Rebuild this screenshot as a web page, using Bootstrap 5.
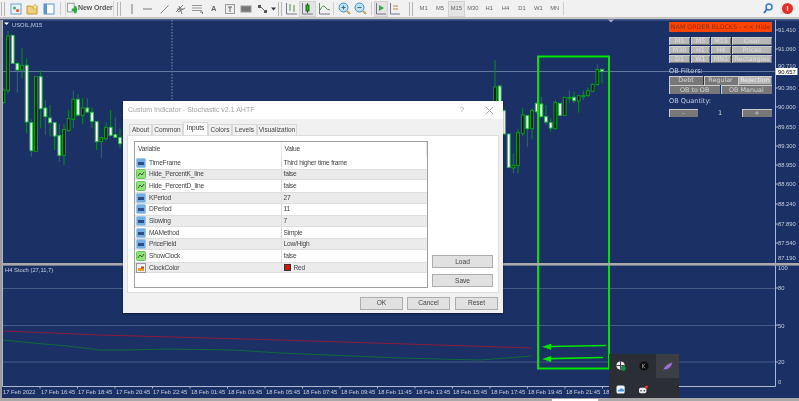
<!DOCTYPE html>
<html lang="en">
<head>
<meta charset="utf-8">
<title>MT4 Custom Indicator</title>
<link href="https://cdn.jsdelivr.net/npm/bootstrap@5.3.0/dist/css/bootstrap.min.css" rel="stylesheet">
<style>
html,body{margin:0;width:799px;height:401px;overflow:hidden;background:#f0f0f0}
body{font-family:"Liberation Sans",Arial,sans-serif;font-size:6.6px;color:#333}
.shell{width:799px;height:401px;filter:blur(.4px)}
.tbar{height:17px;background:#f1f1f1;color:#555;flex:none}
.tbtn{flex:none;height:16px;display:flex;align-items:center;justify-content:center}
.w16{width:16.4px}.w14{width:14px}
.grip{flex:none;height:14px;border-left:1px solid #b5b5b5;border-right:1px solid #b5b5b5;width:4px}
.tsep{flex:none;width:1px;height:13px;background:#cfcfcf}
.tact{background:#e4e4e4;outline:1px solid #d2d2d2;outline-offset:-1px}
.ntbtn{width:49px;font-size:7px;font-weight:700;letter-spacing:-.1px;color:#5a5a5a;gap:1px;white-space:nowrap;border-left:1px solid #d8d8d8;border-right:1px solid #d8d8d8}
.tfr{font-size:5.8px;color:#666}
.chartbox{flex:1 1 auto;background:#1b3065;position:relative;overflow:hidden}
.chartsvg{display:block;width:799px;height:381px}
.ax{font:5.8px "Liberation Sans",sans-serif;fill:#c6cede}
.endbar{height:3px;background:#a9a9a9;flex:none;position:relative}
.endtab{position:absolute;left:552px;top:1px;width:46px;height:2px;background:#fff}
.obpanel{position:absolute;left:669px;top:5px;width:103px;color:#c8d0e0;font:6.6px/9px "DejaVu Sans",sans-serif}
.obbtn{border:0;border-radius:0;padding:0;font:6.4px/8.4px "DejaVu Sans",sans-serif;height:8.6px;flex:1 1 0;min-width:0;white-space:nowrap;overflow:hidden;box-shadow:inset 1px 1px 0 #ccc,inset -1px -1px 0 #777}
.obhead{display:block;width:103px;height:9.6px;background:#ff4300;color:#8c2c12;font:6.3px/9.4px "DejaVu Sans",sans-serif;border:0;border-radius:0;padding:0}
.obhead:hover{background:#ff4300;color:#8c2c12}
.oblt{background:#b7b7b7;color:#dcdcdc}
.obdk{background:#787878;color:#d4d4d4}
.obon{background:#b4b4b4;color:#f0f0f0}
.oblt:hover{background:#b7b7b7;color:#dcdcdc}
.dlg{position:absolute;left:123px;top:84px;width:380px;height:212px;background:#f0f0f0;box-shadow:0 1px 2px rgba(0,0,0,.45)}
.dlgtitle{height:18px;background:#fff;color:#a3a3a3;font-size:7px;padding:0 0 0 5px}
.dlgq{color:#a5a5a5;font-size:8px;width:12px;text-align:center;margin-right:18px}
.dlgx{margin-right:10px}
.dtabs{margin:5px 0 0 6px;height:11px;border:0;flex-wrap:nowrap}
.dtabs .nav-link{font-size:6.5px;line-height:10px;height:11px;padding:0;text-align:center;color:#444;background:#f0f0f0;border:1px solid #d9d9d9;border-bottom:0;border-radius:0;margin:0;white-space:nowrap}
.dtabs .nav-link.active{background:#fff;color:#333;height:13px;margin-top:-2px;padding-top:0;border-color:#d9d9d9}
.dpane{position:absolute;left:4px;top:34px;width:372px;height:158px;background:#fff;border:1px solid #dcdcdc}
.dtablebox{position:absolute;left:6px;top:5px;width:294px;height:147px;border:1px solid #a0a0a0;background:#fff}
.dtable{table-layout:fixed;width:100%;font-size:6.6px;letter-spacing:-.2px;margin:0;--bs-table-bg:transparent}
.dtable th,.dtable td{padding:0;font-weight:400;color:#444;border:0;vertical-align:middle;white-space:nowrap;line-height:10px}
.dtable th{height:15px;padding:0 0 2px 3px;border-right:1px solid #e6e6e6}
.dtable tbody tr{height:11.65px}
.dtable tr.alt td{background:#ebebeb;box-shadow:inset 0 1px 0 #dedede,inset 0 -1px 0 #dedede}
.dtable td.vc{padding-left:2px;border-left:1px solid #ddd}
.dtable td.nc{padding-left:1px}
.ricon{width:10px;height:10px;vertical-align:-3px;margin-right:3px}
.cswatch{display:inline-block;width:7px;height:7px;background:#f00;border:1px solid #333;vertical-align:-1px;margin-right:3px}
.wbtn{position:absolute;background:#e1e1e1;border:1px solid #adadad;border-radius:0;color:#444;font-size:6.6px;line-height:10px;padding:0}
.wbtn:hover{background:#e1e1e1;border-color:#adadad;color:#444}
.bload{left:309px;top:154px;width:61px;height:13px}
.bsave{left:309px;top:173px;width:61px;height:13px}
.bok{left:237px;top:196px;width:43px;height:12.5px}
.bcancel{left:284px;top:196px;width:43px;height:12.5px}
.breset{left:332px;top:196px;width:43px;height:12.5px}
.trayp{position:absolute;left:609px;top:337px;width:70px;height:47px;background:#2b2e35;display:grid;grid-template-columns:repeat(3,1fr);grid-template-rows:24px 23px}
.traycell{display:flex;align-items:center;justify-content:center}
.trayon{background:#3c3e46}
</style>
</head>
<body>
<svg width="0" height="0" class="position-absolute">
<symbol id="ib" viewBox="0 0 10 10"><rect x=".5" y=".5" width="9" height="9" rx="1" fill="#74aee2" stroke="#9cc8ee"/><rect x="2" y="4" width="6" height="3" fill="#2e4f86"/></symbol>
<symbol id="ig" viewBox="0 0 10 10"><rect x=".5" y=".5" width="9" height="9" rx="1" fill="#93e07f" stroke="#6ac655"/><path d="M2 7l2-3 2 2 2-3" fill="none" stroke="#2a6a2a" stroke-width="1"/></symbol>
<symbol id="ic" viewBox="0 0 10 10"><rect x=".5" y=".5" width="9" height="9" fill="#f3f3f3" stroke="#999"/><rect x="2" y="5" width="6" height="3" fill="#f39a1f"/><rect x="5" y="3.5" width="3" height="2" fill="#e23a1a"/></symbol>
</svg>
<div class="shell d-flex flex-column">
  <div class="tbar d-flex align-items-center">
    <span class="grip" style="margin:0 3px 0 1px"></span>
    <span class="tbtn w16"><svg width="12" height="12" viewBox="0 0 12 12"><rect x="1" y="1" width="10" height="10" fill="#eaf3fb" stroke="#6ea4c9"/><circle cx="4.5" cy="5" r="1.6" fill="#3bb56a"/><circle cx="7.5" cy="7.5" r="1.6" fill="#e0523a"/></svg></span>
    <span class="tbtn w16"><svg width="13" height="12" viewBox="0 0 13 12"><path d="M1 3h4l1 1h5v7H1z" fill="#f0cf7a" stroke="#c09a3c"/><path d="M9 1l1 2 2 .2-1.5 1.4.4 2L9 5.6 7.1 6.6l.4-2L6 3.2 8 3z" fill="#f6e28c" stroke="#c8a23c" stroke-width=".5"/></svg></span>
    <span class="tbtn w16"><svg width="12" height="12" viewBox="0 0 12 12"><rect x="1" y="1" width="10" height="10" fill="#fff" stroke="#5b95c8"/><rect x="1" y="1" width="3" height="10" fill="#5b95c8"/></svg></span>
    <span class="tsep" style="margin:0 2.500px"></span>
    <span class="tbtn ntbtn" style="margin-left:1.400px"><svg width="12" height="14" viewBox="0 0 12 14"><rect x="1.5" y="1" width="7" height="9" fill="#f4f4f4" stroke="#999"/><path d="M6 6.500h2.500V4h2.500v2.500h1v2.500h-1v2.500H8.500V9H6z" fill="#27ab3c"/></svg>New Order</span>
    <span class="grip" style="margin:0 3px"></span>
    <span class="tbtn w16"><svg width="12" height="12"><path d="M6 1v10" stroke="#777"/></svg></span>
    <span class="tbtn w16"><svg width="12" height="12"><path d="M1 6h9" stroke="#777"/></svg></span>
    <span class="tbtn w16"><svg width="12" height="12"><path d="M1.500 10.500l8-8" stroke="#888"/></svg></span>
    <span class="tbtn w16"><svg width="12" height="12"><path d="M1 9l7-7M2 6l6 0M3 9l7-4M4 3l3 8" stroke="#777"/></svg></span>
    <span class="tbtn w16"><svg width="12" height="12"><path d="M1 2.500h10M1 5h10M1 7.500h10" stroke="#999"/><path d="M9 9h2.500v2" stroke="#777" fill="none"/></svg></span>
    <span class="tbtn w16 fw-bold" style="color:#666;font-size:7.500px">A</span>
    <span class="tbtn w16"><svg width="12" height="12"><rect x="1.500" y="1.500" width="9" height="9" fill="#eee" stroke="#999"/><path d="M4 4h4M6 4v5" stroke="#666"/></svg></span>
    <span class="tbtn w16"><svg width="12" height="12"><rect x="1" y="3" width="10" height="6" fill="#777" stroke="#999"/></svg></span>
    <span class="tbtn w16"><svg width="12" height="12"><rect x="1" y="2" width="3" height="3" fill="#555"/><rect x="7" y="7" width="3" height="3" fill="#555"/><path d="M4 4l4 4" stroke="#777"/></svg></span>
    <svg class="flex-none" width="5" height="4"><path d="M0 .5h5L2.500 3.500z" fill="#333"/></svg>
    <span class="grip" style="margin:0 1px 0 2px"></span>
    <span class="tbtn w16"><svg width="13" height="13"><path d="M1.500 1v11H12" stroke="#778" fill="none"/><path d="M5 2v7M9 3v7" stroke="#4a8a4a"/></svg></span>
    <span class="tbtn w16 tact"><svg width="13" height="13"><path d="M1.500 1v11H12" stroke="#778" fill="none"/><path d="M6.500 1v10" stroke="#2a8a2a"/><rect x="5" y="3" width="3" height="6" fill="#2ca82c" stroke="#1d6b1d"/></svg></span>
    <span class="tbtn w16"><svg width="13" height="13"><path d="M1.500 1v11H12" stroke="#778" fill="none"/><path d="M2 8q3-6 5-3t5 3" stroke="#4a8a4a" fill="none"/></svg></span>
    <span class="tsep" style="margin:0 2px 0 1px"></span>
    <span class="tbtn w16"><svg width="13" height="13"><circle cx="5.500" cy="5.500" r="4.500" fill="#bfe0f6" stroke="#3f8fc4"/><path d="M3.500 5.500h4M5.500 3.500v4" stroke="#2a6ea6"/><path d="M9 9l3 3" stroke="#c9a84b" stroke-width="2"/></svg></span>
    <span class="tbtn w16"><svg width="13" height="13"><circle cx="5.500" cy="5.500" r="4.500" fill="#bfe0f6" stroke="#3f8fc4"/><path d="M3.500 5.500h4" stroke="#2a6ea6"/><path d="M9 9l3 3" stroke="#c9a84b" stroke-width="2"/></svg></span>
    <span class="tsep" style="margin:0 2px"></span>
    <span class="tbtn w14 tact"><svg width="12" height="13"><path d="M1.500 1v11H11" stroke="#778" fill="none"/><path d="M4 3l5 3-5 3z" fill="#35a84a"/></svg></span>
    <span class="tbtn w14"><svg width="12" height="13"><path d="M1.500 1v11H11" stroke="#778" fill="none"/><path d="M4 4h5M4 7h5" stroke="#d0813c"/></svg></span>
    <span class="grip" style="margin:0 2.400px 0 7px"></span>
    <span class="tbtn w16 tfr">M1</span><span class="tbtn w16 tfr">M5</span><span class="tbtn w16 tfr tact">M15</span><span class="tbtn w16 tfr">M30</span><span class="tbtn w16 tfr">H1</span><span class="tbtn w16 tfr">H4</span><span class="tbtn w16 tfr">D1</span><span class="tbtn w16 tfr">W1</span><span class="tbtn w16 tfr">MN</span>
    <span class="tsep"></span>
    <span class="ms-auto d-flex align-items-center" style="gap:6px;margin-right:5px">
      <svg width="10" height="11"><circle cx="6" cy="4" r="3" fill="none" stroke="#2f7fd0" stroke-width="1.500"/><path d="M4 6L1 10" stroke="#2f6fc0" stroke-width="1.800"/></svg>
      <svg width="15" height="14" viewBox="0 0 15 14"><path d="M1 11l5-4 3 5H2z" fill="#ddd"/><circle cx="8.500" cy="6.500" r="5.500" fill="#e3312a"/><path d="M8.500 4v5" stroke="#fff" stroke-width="1.200"/></svg>
    </span>
  </div>

  <div class="chartbox">
    <svg class="chartsvg" viewBox="0 17 799 381" id="chart">
      <rect x="0" y="17" width="799" height="2" fill="#c6c6c6"/>
      <rect x="0" y="19" width="799" height="1.500" fill="#4b5f8d"/>
      <path d="M172 20v243" stroke="#8090b0" stroke-dasharray="1.500 1.500"/>
      <path d="M3 71.500H775" stroke="#66779f"/>
      <g id="candles"></g>
      <path d="M3 288.500H775M3 325.500H775M3 362H775" stroke="#465a85" stroke-width="1.200"/>
      <path d="M3 331L100 335L280 340L532 348" fill="none" stroke="#8b1b3c"/>
      <path d="M3 340L33 343L67 346L100 350L127 350L167 349L233 350L280 353L400 358L480 360L532 356" fill="none" stroke="#0f6a3c"/>
      <rect x="538" y="56.500" width="71" height="312" fill="none" stroke="#00e400" stroke-width="2"/>
      <path d="M606 345.500L551 346.500" stroke="#00e400" stroke-width="1.700"/><path d="M542 346.700l9-3v6z" fill="#00e400"/>
      <path d="M603 357.500L551 358.700" stroke="#00e400" stroke-width="1.700"/><path d="M542 359l9-3v6z" fill="#00e400"/>
      <path d="M608 19.500h6l-3 3z" fill="#aab"/>
      <path d="M4 22.500h5l-2.500 2.500z" fill="#fff"/>
      <text class="ax" x="12" y="26.500">USOIL,M15</text>
      <rect x="0" y="20" width="2" height="378" fill="#9a9a9a"/>
      <path d="M2.500 20v366.500H775.500V20" fill="none" stroke="#aeb7cc"/>
      <rect x="2" y="263" width="797" height="2.600" fill="#aaaaaa"/>
      <text class="ax" x="5" y="272">H4 Stoch (27,11,7)</text>
      <g class="ax">
        <text x="778" y="32">91.410</text><text x="778" y="51">91.060</text><text x="778" y="68">90.710</text>
        <text x="778" y="90">90.360</text><text x="778" y="109">90.000</text><text x="778" y="129">89.650</text>
        <text x="778" y="148">89.300</text><text x="778" y="167">88.950</text><text x="778" y="186">88.600</text>
        <text x="778" y="206">88.240</text><text x="778" y="226">87.890</text><text x="778" y="245">87.540</text>
        <text x="778" y="260">87.190</text>
        <text x="778" y="270">100</text><text x="778" y="290">80</text><text x="778" y="328">50</text><text x="778" y="364">20</text><text x="778" y="384">0</text>
      </g>
      <path d="M776 30h2M776 49h2M776 88h2M776 107h2M776 127h2M776 146h2M776 165h2M776 184h2M776 204h2M776 224h2M776 243h2M776 288h2M776 325h2M776 362h2" stroke="#aeb7cc"/>
      <rect x="776" y="68" width="21.500" height="7" fill="#fff"/>
      <text x="778" y="74" style="font:5.800px 'Liberation Sans',sans-serif;fill:#111">90.657</text>
      <g class="ax">
        <text x="3" y="394">17 Feb 2022</text><text x="41" y="394">17 Feb 16:45</text><text x="78" y="394">17 Feb 18:45</text><text x="116" y="394">17 Feb 20:45</text><text x="153" y="394">17 Feb 22:45</text><text x="191" y="394">18 Feb 01:45</text><text x="228" y="394">18 Feb 03:45</text><text x="266" y="394">18 Feb 05:45</text><text x="303" y="394">18 Feb 07:45</text><text x="341" y="394">18 Feb 09:45</text><text x="378" y="394">18 Feb 11:45</text><text x="416" y="394">18 Feb 13:45</text><text x="453" y="394">18 Feb 15:45</text><text x="491" y="394">18 Feb 17:45</text><text x="528" y="394">18 Feb 19:45</text><text x="566" y="394">18 Feb 21:45</text><text x="603" y="394">18</text>
      </g>
      <path d="M40 386.500v2M77.500 386.500v2M115 386.500v2M152.500 386.500v2M190 386.500v2M227.500 386.500v2M265 386.500v2M302.500 386.500v2M340 386.500v2M377.500 386.500v2M415 386.500v2M452.500 386.500v2M490 386.500v2M527.500 386.500v2M565 386.500v2M602.500 386.500v2" stroke="#aeb7cc"/>
    </svg>

    <div class="obpanel">
      <button type="button" class="btn obhead">NAM ORDER BLOCKS - &lt;&lt; Hide</button>
      <div class="d-flex" style="margin-top:5px;gap:1px"><button type="button" class="btn obbtn oblt" style="flex:21 1 0">M1</button><button type="button" class="btn obbtn oblt" style="flex:19 1 0">M5</button><button type="button" class="btn obbtn oblt" style="flex:20 1 0">M15</button><button type="button" class="btn obbtn oblt" style="flex:40 1 0">Clear</button></div>
      <div class="d-flex" style="margin-top:.5px;gap:1px"><button type="button" class="btn obbtn oblt" style="flex:21 1 0">M30</button><button type="button" class="btn obbtn oblt" style="flex:19 1 0">H1</button><button type="button" class="btn obbtn oblt" style="flex:20 1 0">H4</button><button type="button" class="btn obbtn oblt" style="flex:40 1 0">Prices</button></div>
      <div class="d-flex" style="margin-top:.5px;gap:1px"><button type="button" class="btn obbtn oblt" style="flex:21 1 0">D1</button><button type="button" class="btn obbtn oblt" style="flex:19 1 0">W1</button><button type="button" class="btn obbtn oblt" style="flex:20 1 0">MN1</button><button type="button" class="btn obbtn oblt" style="flex:40 1 0">Rectangles</button></div>
      <div style="margin-top:3.500px;height:9px">OB Filters:</div>
      <div class="d-flex" style="margin-top:.5px;gap:.5px"><button type="button" class="btn obbtn obdk">Debt</button><button type="button" class="btn obbtn obdk">Regular</button><button type="button" class="btn obbtn obon">Rejection</button></div>
      <div class="d-flex" style="margin-top:.5px;gap:.5px"><button type="button" class="btn obbtn obdk">OB to OB</button><button type="button" class="btn obbtn obdk">OB Manual</button></div>
      <div style="margin-top:3px;height:9px">OB Quantity:</div>
      <div class="d-flex align-items-center justify-content-between" style="margin-top:2.500px"><button type="button" class="btn obbtn obdk" style="flex:0 0 29px">-</button><span>1</span><button type="button" class="btn obbtn obdk" style="flex:0 0 30px">+</button></div>
    </div>

    <div class="dlg">
      <div class="dlgtitle d-flex align-items-center"><span class="flex-grow-1">Custom Indicator - Stochastic v2.1 AHTF</span><span class="dlgq">?</span><svg class="dlgx" width="7" height="7"><path d="M0 0l7 7M7 0L0 7" stroke="#a8a8a8"/></svg></div>
      <ul class="nav nav-tabs dtabs">
        <li class="nav-item"><a class="nav-link" href="#" style="width:23px">About</a></li>
        <li class="nav-item"><a class="nav-link" href="#" style="width:31px">Common</a></li>
        <li class="nav-item"><a class="nav-link active" href="#" style="width:25px">Inputs</a></li>
        <li class="nav-item"><a class="nav-link" href="#" style="width:24px">Colors</a></li>
        <li class="nav-item"><a class="nav-link" href="#" style="width:25px">Levels</a></li>
        <li class="nav-item"><a class="nav-link" href="#" style="width:40px">Visualization</a></li>
      </ul>
      <div class="dpane">
        <div class="dtablebox">
          <table class="table dtable">
            <colgroup><col style="width:146px"><col></colgroup>
            <thead><tr><th>Variable</th><th>Value</th></tr></thead>
            <tbody>
              <tr><td class="nc"><svg class="ricon"><use href="#ib"/></svg>TimeFrame</td><td class="vc">Third higher time frame</td></tr>
              <tr class="alt"><td class="nc"><svg class="ricon"><use href="#ig"/></svg>Hide_PercentK_line</td><td class="vc">false</td></tr>
              <tr><td class="nc"><svg class="ricon"><use href="#ig"/></svg>Hide_PercentD_line</td><td class="vc">false</td></tr>
              <tr class="alt"><td class="nc"><svg class="ricon"><use href="#ib"/></svg>KPeriod</td><td class="vc">27</td></tr>
              <tr><td class="nc"><svg class="ricon"><use href="#ib"/></svg>DPeriod</td><td class="vc">11</td></tr>
              <tr class="alt"><td class="nc"><svg class="ricon"><use href="#ib"/></svg>Slowing</td><td class="vc">7</td></tr>
              <tr><td class="nc"><svg class="ricon"><use href="#ib"/></svg>MAMethod</td><td class="vc">Simple</td></tr>
              <tr class="alt"><td class="nc"><svg class="ricon"><use href="#ib"/></svg>PriceField</td><td class="vc">Low/High</td></tr>
              <tr><td class="nc"><svg class="ricon"><use href="#ig"/></svg>ShowClock</td><td class="vc">false</td></tr>
              <tr class="alt"><td class="nc"><svg class="ricon"><use href="#ic"/></svg>ClockColor</td><td class="vc"><span class="cswatch"></span>Red</td></tr>
            </tbody>
          </table>
        </div>
      </div>
      <button type="button" class="btn wbtn bload">Load</button>
      <button type="button" class="btn wbtn bsave">Save</button>
      <button type="button" class="btn wbtn bok">OK</button>
      <button type="button" class="btn wbtn bcancel">Cancel</button>
      <button type="button" class="btn wbtn breset">Reset</button>
    </div>

    <div class="trayp">
      <span class="traycell"><svg width="10" height="10" viewBox="0 0 11 11"><circle cx="5" cy="5" r="4.500" fill="#eee"/><path d="M5 .5v9M.5 5h9" stroke="#333"/><circle cx="8" cy="8" r="2.800" fill="#1a8a4a"/></svg></span>
      <span class="traycell"><svg width="10" height="10" viewBox="0 0 11 11"><circle cx="5.500" cy="5.500" r="5" fill="#0c0c0c"/><path d="M4 3v5M4 5.500l3-2.500M4 5.500l3 2.500" stroke="#888"/></svg></span>
      <span class="traycell trayon"><svg width="11" height="9" viewBox="0 0 13 11"><path d="M1 10.500C3 5 7 1.500 12.500.5 11.500 6 7 9 3 9z" fill="#9a6fd0"/></svg></span>
      <span class="traycell"><svg width="10" height="9" viewBox="0 0 12 11"><rect x=".5" y=".5" width="10" height="10" rx="2" fill="#f0f6fc"/><path d="M2 8c0-2 1-2 2-2 0-2 3-3 4-1 1.500 0 2 1.500 2 3z" fill="#3d9be9"/></svg></span>
      <span class="traycell"><svg width="11" height="9" viewBox="0 0 13 11"><rect x="1" y="3.500" width="9" height="6.500" rx="2" fill="#eee"/><circle cx="3.500" cy="7" r="1" fill="#333"/><circle cx="7.500" cy="7" r="1" fill="#333"/><circle cx="10" cy="2.500" r="2" fill="#e8322a"/></svg></span>
    </div>
  </div>
  <div class="endbar"><span class="endtab"></span></div>
</div>
<script>
// [centre x, wick top, wick bottom, body top, body bottom, up?]  zoomed reference pixels
var NS="http://www.w3.org/2000/svg",g=document.getElementById("candles");
var a=[[10,205,250,210,248,0],[24,33,220,48,212,0],[38,46,130,46,130,1],[52,130,218,130,150,1],[66,85,175,136,150,0],[80,115,340,136,306,1],[94,298,410,308,392,1],[108,170,394,170,394,0],[122,150,325,170,266,1],[136,240,345,264,290,1],[150,255,350,294,308,1],[164,310,390,308,348,1],[178,312,425,347,406,1],[192,312,435,328,406,0],[206,270,335,296,332,0],[220,212,325,238,298,0],[234,222,290,238,285,1],[248,235,312,264,286,0],[262,235,280,264,276,1],[276,262,325,277,304,1],[290,305,390,305,365,1],[304,350,415,353,365,0],[318,308,362,322,356,0],[332,270,350,322,346,1],[346,293,352,344,352,1],[360,325,385,353,371,1]];
var b=[[12,175,255,182,252,1],[26,252,352,252,352,1],[40,310,370,346,354,0],[54,238,370,248,346,0],[68,175,258,195,250,0],[82,197,290,197,236,1],[96,175,268,182,236,0],[110,158,190,160,185,1],[124,140,200,162,200,1],[138,165,225,200,216,1],[152,205,245,218,234,1],[166,150,238,157,236,0],[180,160,196,160,196,1],[194,142,196,142,196,0],[208,122,158,142,146,0],[222,125,160,142,152,1],[236,137,188,137,153,0],[250,122,150,136,140,0],[264,112,140,122,137,0],[278,100,126,103,124,0],[292,44,106,58,104,0],[306,58,100,58,64,1]];
function c(x,wt,wb,bt,bb,up){
 var l=document.createElementNS(NS,"path");l.setAttribute("d","M"+x+" "+wt+"V"+wb);l.setAttribute("stroke","#0b8a25");l.setAttribute("stroke-width","1");g.appendChild(l);
 var r=document.createElementNS(NS,"rect");r.setAttribute("x",x-1.4);r.setAttribute("y",bt);r.setAttribute("width",2.8);r.setAttribute("height",Math.max(bb-bt,1));r.setAttribute("fill",up?"#fff":"#041c0c");r.setAttribute("stroke",up?"#25c040":"#0aa01f");r.setAttribute("stroke-width","1");g.appendChild(r);
}
a.forEach(function(k){c(k[0]/3,20+k[1]/3,20+k[2]/3,20+k[3]/3,20+k[4]/3,k[5]);});
c(495,60,120,87,120,0);c(499.7,88,120,86,120,1);
b.forEach(function(k){c(500+k[0]/3,50+k[1]/3,50+k[2]/3,50+k[3]/3,50+k[4]/3,k[5]);});
</script>
<script src="https://cdn.jsdelivr.net/npm/bootstrap@5.3.0/dist/js/bootstrap.bundle.min.js"></script>
</body>
</html>
